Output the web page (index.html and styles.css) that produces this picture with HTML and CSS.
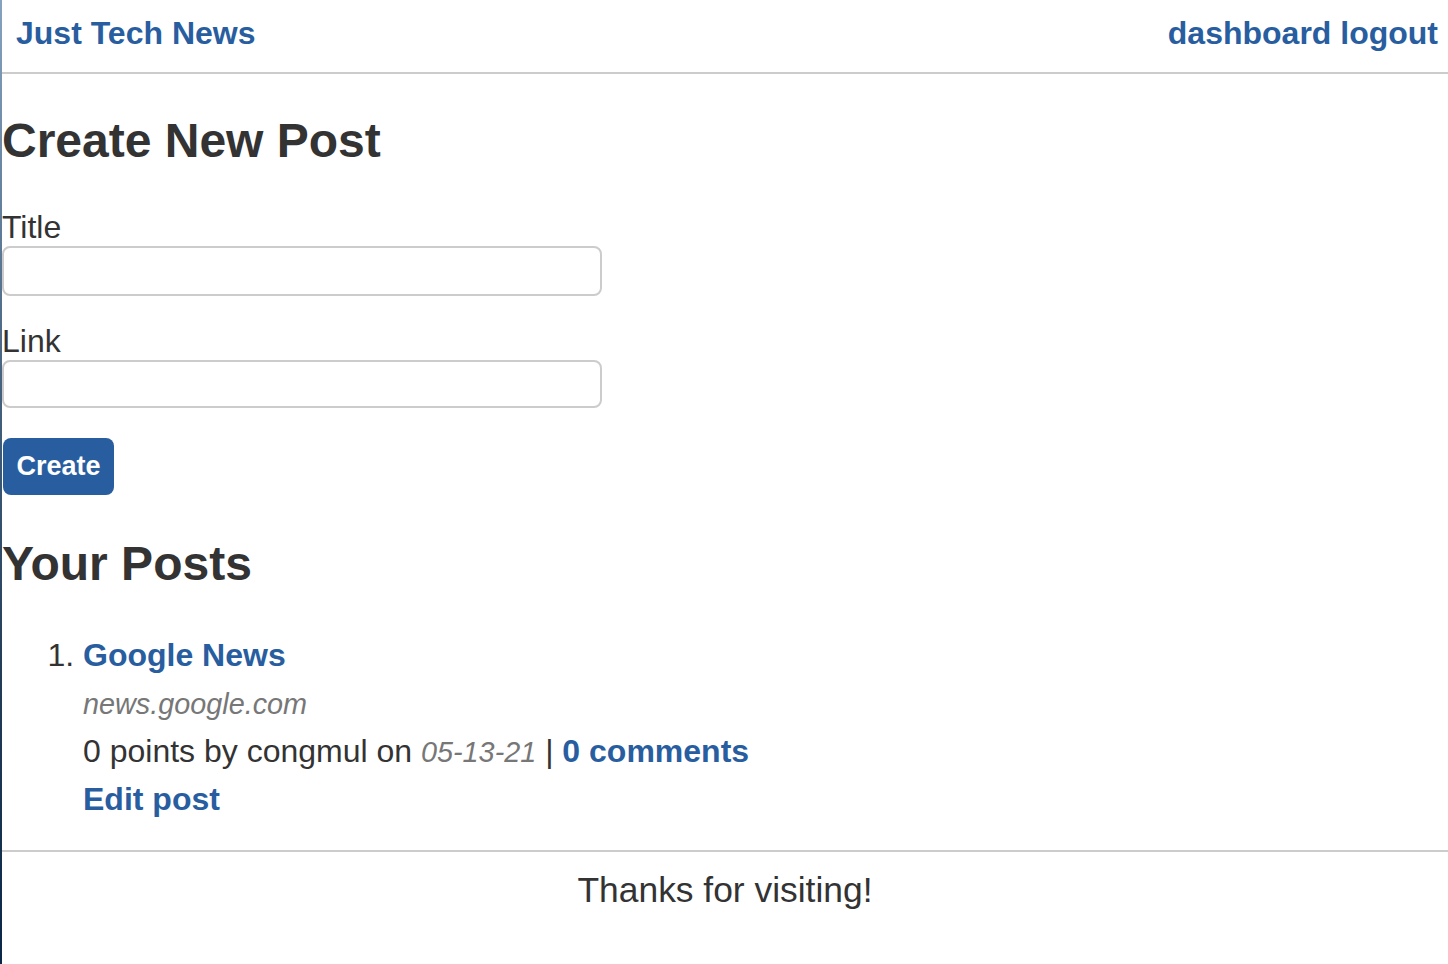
FILE: index.html
```html
<!DOCTYPE html>
<html lang="en">
<head>
<meta charset="utf-8">
<title>Just Tech News</title>
<link rel="stylesheet" href="styles.css">
</head>
<body>
<div class="page">
  <header class="site-header">
    <a class="brand" href="#">Just Tech News</a>
    <nav class="nav">
      <a href="#">dashboard</a> <a href="#">logout</a>
    </nav>
  </header>
  <main class="main">
    <h1 class="heading">Create New Post</h1>
    <form class="post-form">
      <label class="label" for="title">Title</label>
      <input class="field field-title" id="title" type="text">
      <label class="label label-second" for="link">Link</label>
      <input class="field" id="link" type="text">
      <button class="btn" type="button">Create</button>
    </form>
    <h2 class="heading heading-posts">Your Posts</h2>
    <ol class="posts">
      <li class="post">
        <div><a class="post-title" href="#">Google News</a></div>
        <div><span class="muted">news.google.com</span></div>
        <div class="meta">0 points by congmul on <span class="muted">05-13-21</span> | <a class="strong-link" href="#">0 comments</a></div>
        <div class="meta"><a class="strong-link" href="#">Edit post</a></div>
      </li>
    </ol>
  </main>
  <footer class="site-footer">Thanks for visiting!</footer>
</div>
</body>
</html>
```

FILE: styles.css
```css
html, body {
  margin: 0;
  padding: 0;
  background: #ffffff;
}

body {
  font-family: "Liberation Sans", Arial, Helvetica, sans-serif;
  color: #333333;
  font-size: 32px;
}

.page {
  min-height: 964px;
  box-sizing: border-box;
  border-left: 2px solid #3a5877;
  border-image: linear-gradient(to bottom, #86a2bf 0%, #46627f 40%, #223c58 70%, #0c2746 100%) 1;
}

a {
  color: #285ea0;
  text-decoration: none;
  font-weight: bold;
}

.site-header {
  display: flex;
  justify-content: space-between;
  align-items: center;
  height: 74px;
  box-sizing: border-box;
  padding: 0 10px 5px 14px;
  border-bottom: 2px solid #cccccc;
}

.brand,
.nav {
  font-size: 32px;
  line-height: 37px;
}

.main {
  padding: 0;
}

.heading {
  font-size: 48px;
  line-height: 56px;
  font-weight: bold;
  margin: 39px 0 0 0;
}

.post-form {
  display: flex;
  flex-direction: column;
  align-items: flex-start;
  margin-top: 40px;
}

.label {
  display: block;
  font-size: 32px;
  line-height: 37px;
}

.label-second {
  margin-top: 27px;
}

.field {
  display: block;
  box-sizing: border-box;
  width: 600px;
  height: 48px;
  margin: 0;
  border: 2px solid #cccccc;
  border-radius: 8px;
  font-family: inherit;
  font-size: 28px;
  padding: 0 10px;
  background: #ffffff;
}

.field-title {
  height: 50px;
}

.btn {
  margin-top: 30px;
  margin-left: 1px;
  height: 57px;
  width: 111px;
  box-sizing: border-box;
  border: none;
  border-radius: 8px;
  background: #285ea0;
  color: #ffffff;
  font-family: inherit;
  font-weight: bold;
  font-size: 27px;
  padding: 0;
  cursor: pointer;
}

.heading-posts {
  margin-top: 41px;
}

.posts {
  margin: 39px 0 0 0;
  padding: 0 0 0 81px;
  line-height: 48px;
}

.post-title {
  font-size: 32px;
}

.muted {
  font-style: italic;
  color: #777777;
  font-size: 28.8px;
}

.meta {
  line-height: 47px;
}

.strong-link {
  font-size: 32px;
}

.site-footer {
  margin-top: 27px;
  border-top: 2px solid #cccccc;
  text-align: center;
  font-size: 35.4px;
  line-height: 40px;
  padding-top: 18px;
}
```
